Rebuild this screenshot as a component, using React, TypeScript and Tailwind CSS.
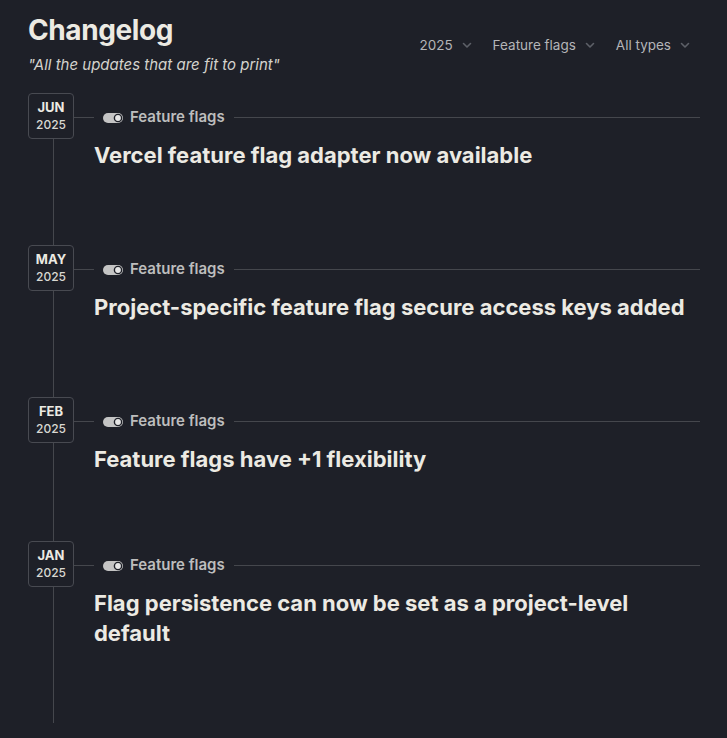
import type React from "react"

interface Entry {
  month: string
  year: string
  tag: string
  title: string
  height: string
}

const entries: Entry[] = [
  { month: "JUN", year: "2025", tag: "Feature flags", title: "Vercel feature flag adapter now available", height: "h-[152px]" },
  { month: "MAY", year: "2025", tag: "Feature flags", title: "Project-specific feature flag secure access keys added", height: "h-[152px]" },
  { month: "FEB", year: "2025", tag: "Feature flags", title: "Feature flags have +1 flexibility", height: "h-[144px]" },
  { month: "JAN", year: "2025", tag: "Feature flags", title: "Flag persistence can now be set as a project-level default", height: "h-[182px]" },
]

const Chevron = () => (
  <svg className="w-[10px] h-[10px] text-[#5d6068]" viewBox="0 0 10 10" fill="none">
    <path d="M1.5 3.5 5 7l3.5-3.5" stroke="currentColor" strokeWidth="1.6" strokeLinecap="round" strokeLinejoin="round" />
  </svg>
)

const ToggleIcon = () => (
  <svg className="w-[20px] h-[10px]" viewBox="0 0 20 10">
    <rect x="0" y="0" width="20" height="10" rx="5" fill="#c4c4c4" />
    <circle cx="15" cy="5" r="3.6" fill="#e6e6e6" stroke="#1e2028" strokeWidth="1.4" />
  </svg>
)

const Filter: React.FC<{ label: string }> = ({ label }) => (
  <button className="flex items-center gap-[9px] text-[13.5px] text-[#b4b5b8]">
    {label}
    <Chevron />
  </button>
)

const ChangelogEntry: React.FC<{ entry: Entry }> = ({ entry }) => {
  return (
    <div className={`flex ${entry.height}`}>
      {/* date column */}
      <div className="w-[46px] flex flex-col shrink-0">
        <div className="w-[46px] h-[46px] border border-[#484a51] rounded-[4px] flex flex-col items-center justify-center leading-none">
          <span className="text-[13px] font-bold text-[#eceae3]">{entry.month}</span>
          <span className="text-[12px] font-medium text-[#d9d8d2] mt-[5px]">{entry.year}</span>
        </div>
        <div className="flex-1 w-px ml-[25px] bg-[#45474d]"></div>
      </div>

      {/* content */}
      <div className="flex-1 min-w-0">
        <div className="h-[50px] flex items-center">
          <div className="w-[20px] h-px bg-[#45474d]"></div>
          <div className="ml-[9px]">
            <ToggleIcon />
          </div>
          <span className="ml-[7px] text-[15px] font-semibold text-[#bdbdbd]">{entry.tag}</span>
          <div className="ml-[9px] flex-1 h-px bg-[#45474d]"></div>
        </div>
        <h2 className="-mt-[3px] ml-[20px] text-[22px] leading-[30px] font-bold text-[#eceae3]">
          {entry.title}
        </h2>
      </div>
    </div>
  )
}

const App: React.FC = () => {
  return (
    <div className="min-h-screen bg-[#1e2028] font-['Inter',sans-serif] pl-[28px] pr-[27px]">
      <div className="flex justify-between pt-[13px]">
        <div>
          <h1 className="text-[28px] leading-[34px] font-bold text-[#eceae3] tracking-[-0.4px]">Changelog</h1>
          <p className="mt-[7px] text-[15px] italic text-[#d4d3cd]">"All the updates that are fit to print"</p>
        </div>
        <div className="flex items-start gap-[21px] pt-[22px] pr-[10px]">
          <Filter label="2025" />
          <Filter label="Feature flags" />
          <Filter label="All types" />
        </div>
      </div>

      <div className="mt-[16px]">
        {entries.map((entry, index) => (
          <ChangelogEntry key={index} entry={entry} />
        ))}
      </div>
    </div>
  )
}

export default App
